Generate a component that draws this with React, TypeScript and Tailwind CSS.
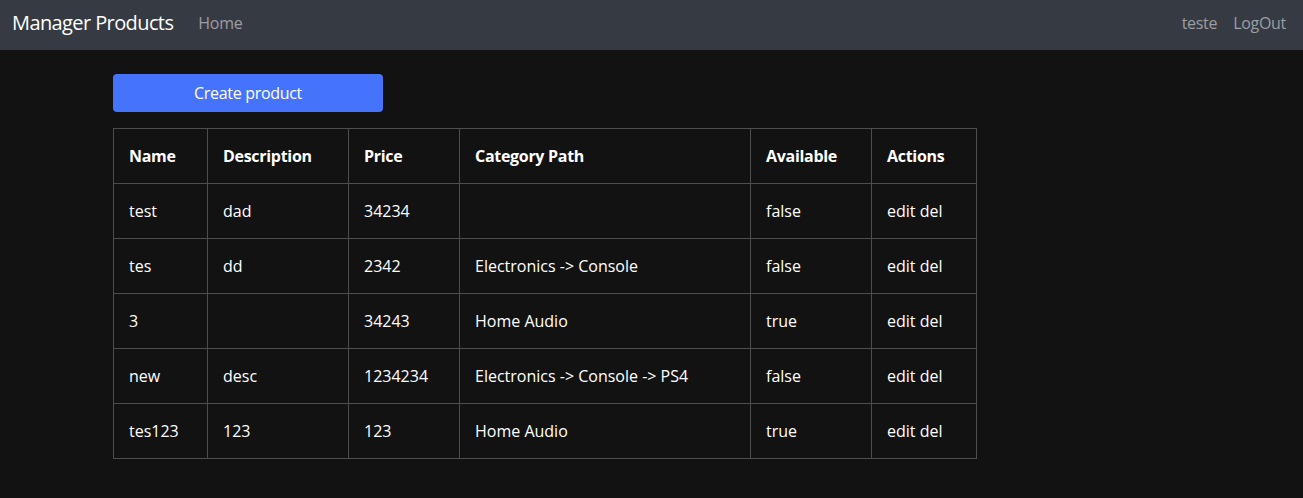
import React from 'react';

const products = [
  { name: 'test', description: 'dad', price: '34234', category: '', available: 'false' },
  { name: 'tes', description: 'dd', price: '2342', category: 'Electronics -> Console', available: 'false' },
  { name: '3', description: '', price: '34243', category: 'Home Audio', available: 'true' },
  { name: 'new', description: 'desc', price: '1234234', category: 'Electronics -> Console -> PS4', available: 'false' },
  { name: 'tes123', description: '123', price: '123', category: 'Home Audio', available: 'true' },
];

const headers = [
  { label: 'Name', w: 'w-[94px]' },
  { label: 'Description', w: 'w-[141px]' },
  { label: 'Price', w: 'w-[111px]' },
  { label: 'Category Path', w: 'w-[291px]' },
  { label: 'Available', w: 'w-[121px]' },
  { label: 'Actions', w: 'w-[105px]' },
];

const cell = 'border border-[#4d4d4d] px-[15px] py-[15px] leading-6 align-middle';

export default function App() {
  return (
    <div className="min-h-[498px] bg-[#121212] text-white font-['Open_Sans','Noto_Sans',sans-serif]">
      {/* Navbar */}
      <nav className="h-[50px] bg-[#363a42] flex items-center justify-between pl-3 pr-[17px] pb-1">
        <div className="flex items-center">
          <span className="text-[20px] tracking-[-0.6px] text-white mr-[25px]">Manager Products</span>
          <a className="text-[#9b9ea3] text-base tracking-[-0.3px]">Home</a>
        </div>
        <div className="flex items-center gap-4 text-base text-[#9b9ea3] tracking-[-0.3px]">
          <a>teste</a>
          <a>LogOut</a>
        </div>
      </nav>

      <main className="pl-[113px] pt-6">
        <button className="w-[270px] h-[38px] bg-[#4673fb] rounded-[4px] text-white text-base tracking-[-0.3px] mb-4">
          Create product
        </button>

        <table className="border-collapse text-base table-fixed w-[864px]">
          <thead>
            <tr>
              {headers.map((h) => (
                <th key={h.label} className={`${cell} ${h.w} text-left font-bold tracking-[-0.3px]`}>
                  {h.label}
                </th>
              ))}
            </tr>
          </thead>
          <tbody>
            {products.map((p, i) => (
              <tr key={i}>
                <td className={cell}>{p.name}</td>
                <td className={cell}>{p.description}</td>
                <td className={cell}>{p.price}</td>
                <td className={cell}>{p.category}</td>
                <td className={cell}>{p.available}</td>
                <td className={cell}>edit del</td>
              </tr>
            ))}
          </tbody>
        </table>
      </main>
    </div>
  );
}
